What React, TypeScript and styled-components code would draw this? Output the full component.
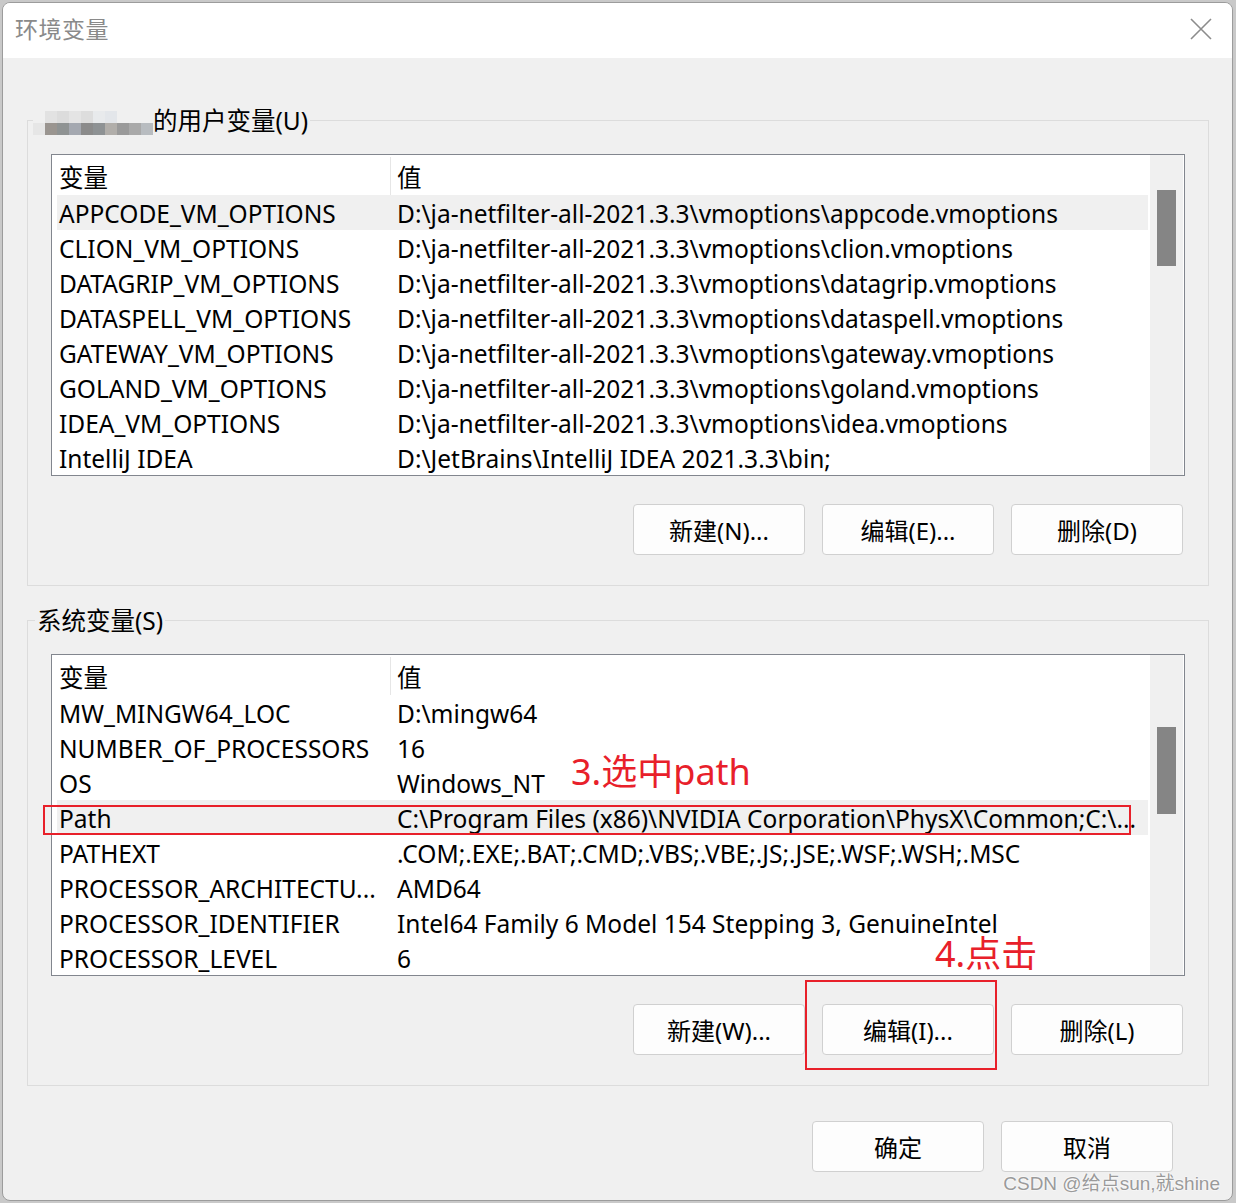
import React, { FC, ReactNode } from 'react';
import styled, { createGlobalStyle } from 'styled-components';

const GlobalStyle = createGlobalStyle`
    html, body {
        margin: 0;
        padding: 0;
        background: #c9c9c9;
    }
    body {
        font-family: "Noto Sans", "Noto Sans CJK SC", sans-serif;
        color: #000;
    }
`;

const Window = styled.div`
    position: relative;
    width: 1229px;
    margin: 2px 3px 0 2px;
    border: 1px solid #9c9c9c;
    border-radius: 8px;
    overflow: hidden;
    background: #f0f0f0;
`;

const TitleBar = styled.div`
    height: 55px;
    background: #fff;
    display: flex;
    align-items: center;
    justify-content: space-between;
    padding: 0 20px 6px 12px;
    box-sizing: border-box;
`;

const Title = styled.span`
    font-size: 23px;
    color: #8a8a8a;
    letter-spacing: 0.5px;
`;

const CloseIcon = styled.svg`
    width: 22px;
    height: 22px;
    margin-top: 3px;
`;

const Body = styled.div`
    padding: 47px 23px 28px 24px;
    display: flex;
    flex-direction: column;
`;

const Group = styled.fieldset<{ $gap?: number }>`
    margin: ${({ $gap }) => $gap || 0}px 0 0 0;
    padding: 0;
    border: 1px solid #dcdcdc;
    min-width: 0;
`;

const Legend = styled.legend`
    margin-left: 7px;
    padding: 1px 2px 0;
    font-size: 24.5px;
    line-height: 30px;
    display: flex;
    align-items: center;
`;

const Blur = styled.span`
    display: inline-grid;
    grid-template-columns: repeat(10, 12px);
    grid-template-rows: 12px 12px;
    margin: 0 0 -4px -4px;
`;

const Pix = styled.span<{ $c: string }>`
    background: ${({ $c }) => $c};
`;

const GroupContent = styled.div`
    padding: 18px 23px 30px 23px;
    display: flex;
    flex-direction: column;
`;

const ListBox = styled.div`
    position: relative;
    height: 320px;
    border: 1px solid #82868e;
    background: #fff;
    display: flex;
`;

const Table = styled.div`
    flex: 0 0 1096px;
    display: flex;
    flex-direction: column;
    font-size: 24.5px;
`;

const Row = styled.div<{ $selected?: boolean; $header?: boolean }>`
    display: grid;
    grid-template-columns: 334px 1fr;
    height: ${({ $header }) => ($header ? 40 : 35)}px;
    box-sizing: border-box;
    padding-top: 2px;
    margin-left: 5px;
    align-items: center;
    background: ${({ $selected }) => ($selected ? '#f0f0f0' : '#fff')};
    white-space: nowrap;
`;

const NameCell = styled.div<{ $header?: boolean }>`
    padding-left: 2px;
    height: 100%;
    display: flex;
    align-items: center;
    border-right: ${({ $header }) => ($header ? '1px solid #e6e6e6' : 'none')};
    overflow: hidden;
`;

const ValueCell = styled.div`
    padding-left: 6px;
    overflow: hidden;
`;

const ScrollTrack = styled.div`
    flex: 1;
    margin: 0 1px 0 2px;
    background: #f0f0f0;
    padding-left: 7px;
`;

const Thumb = styled.div<{ $top: number; $height: number }>`
    width: 19px;
    margin-top: ${({ $top }) => $top}px;
    height: ${({ $height }) => $height}px;
    background: #858585;
`;

const ButtonRow = styled.div<{ $top: number; $right: number }>`
    display: flex;
    justify-content: flex-end;
    gap: 17px;
    margin-top: ${({ $top }) => $top}px;
    padding-right: ${({ $right }) => $right}px;
`;

const Button = styled.div<{ $marked?: boolean }>`
    position: relative;
    width: 170px;
    height: 49px;
    background: #fdfdfd;
    border: 1px solid #d0d0d0;
    border-radius: 4px;
    display: flex;
    align-items: center;
    justify-content: center;
    font-size: 24px;

    &::after {
        content: '';
        display: ${({ $marked }) => ($marked ? 'block' : 'none')};
        position: absolute;
        left: -18px;
        top: -25px;
        right: -4px;
        bottom: -16px;
        border: 2px solid #e8202a;
    }
`;

const RowMark = styled.div`
    position: absolute;
    left: -9px;
    top: 150px;
    width: 1084px;
    height: 26px;
    border: 2px solid #e8202a;
`;

const Note = styled.span<{ $left: number; $top: number }>`
    position: absolute;
    left: ${({ $left }) => $left}px;
    top: ${({ $top }) => $top}px;
    font-size: 36px;
    line-height: 44px;
    color: #e8202a;
    white-space: nowrap;
`;

const Watermark = styled.span`
    position: absolute;
    right: 12px;
    bottom: 5px;
    font-family: "Liberation Sans", "Noto Sans CJK SC", sans-serif;
    font-size: 19px;
    color: #9a9a9a;
    text-shadow: 0 0 2px #fff, 0 0 2px #fff;
`;

type Item = [string, string];

const userVars: Item[] = [
    ['APPCODE_VM_OPTIONS', 'D:\\ja-netfilter-all-2021.3.3\\vmoptions\\appcode.vmoptions'],
    ['CLION_VM_OPTIONS', 'D:\\ja-netfilter-all-2021.3.3\\vmoptions\\clion.vmoptions'],
    ['DATAGRIP_VM_OPTIONS', 'D:\\ja-netfilter-all-2021.3.3\\vmoptions\\datagrip.vmoptions'],
    ['DATASPELL_VM_OPTIONS', 'D:\\ja-netfilter-all-2021.3.3\\vmoptions\\dataspell.vmoptions'],
    ['GATEWAY_VM_OPTIONS', 'D:\\ja-netfilter-all-2021.3.3\\vmoptions\\gateway.vmoptions'],
    ['GOLAND_VM_OPTIONS', 'D:\\ja-netfilter-all-2021.3.3\\vmoptions\\goland.vmoptions'],
    ['IDEA_VM_OPTIONS', 'D:\\ja-netfilter-all-2021.3.3\\vmoptions\\idea.vmoptions'],
    ['IntelliJ IDEA', 'D:\\JetBrains\\IntelliJ IDEA 2021.3.3\\bin;'],
];

const sysVars: Item[] = [
    ['MW_MINGW64_LOC', 'D:\\mingw64'],
    ['NUMBER_OF_PROCESSORS', '16'],
    ['OS', 'Windows_NT'],
    ['Path', 'C:\\Program Files (x86)\\NVIDIA Corporation\\PhysX\\Common;C:\\...'],
    ['PATHEXT', '.COM;.EXE;.BAT;.CMD;.VBS;.VBE;.JS;.JSE;.WSF;.WSH;.MSC'],
    ['PROCESSOR_ARCHITECTU...', 'AMD64'],
    ['PROCESSOR_IDENTIFIER', 'Intel64 Family 6 Model 154 Stepping 3, GenuineIntel'],
    ['PROCESSOR_LEVEL', '6'],
];

// пикселизированное имя пользователя
const blurTop = ['#f0f0f0', '#e2e2e2', '#dcdcdc', '#e4e4e4', '#dddddd', '#e8eaec', '#e3e6ea', '#f0f0f0', '#f0f0f0', '#f0f0f0'];
const blurBottom = ['#e6e6e6', '#9a9590', '#8f9393', '#a4a8b0', '#8b8b8b', '#8e9294', '#b1aeaa', '#9a9a9a', '#a9a9a9', '#b8bcc0'];

const VarList: FC<{
    items: Item[];
    selected: number;
    thumbTop: number;
    thumbHeight: number;
    children?: ReactNode;
}> = ({ items, selected, thumbTop, thumbHeight, children }) => (
    <ListBox>
        <Table>
            <Row $header>
                <NameCell $header>变量</NameCell>
                <ValueCell>值</ValueCell>
            </Row>
            {items.map(([name, value], i) => (
                <Row key={name} $selected={i === selected}>
                    <NameCell>{name}</NameCell>
                    <ValueCell>{value}</ValueCell>
                </Row>
            ))}
        </Table>
        <ScrollTrack>
            <Thumb $top={thumbTop} $height={thumbHeight} />
        </ScrollTrack>
        {children}
    </ListBox>
);

const App: FC = () => (
    <>
        <GlobalStyle />
        <Window>
            <TitleBar>
                <Title>环境变量</Title>
                <CloseIcon viewBox="0 0 22 22">
                    <path d="M1 1 L21 21 M21 1 L1 21" stroke="#8c8c8c" strokeWidth="1.6" fill="none" />
                </CloseIcon>
            </TitleBar>
            <Body>
                <Group>
                    <Legend>
                        <Blur>
                            {blurTop.map((c, i) => <Pix key={'t' + i} $c={c} />)}
                            {blurBottom.map((c, i) => <Pix key={'b' + i} $c={c} />)}
                        </Blur>
                        的用户变量(U)
                    </Legend>
                    <GroupContent>
                        <VarList items={userVars} selected={0} thumbTop={35} thumbHeight={76} />
                        <ButtonRow $top={28} $right={2}>
                            <Button>新建(N)...</Button>
                            <Button>编辑(E)...</Button>
                            <Button>删除(D)</Button>
                        </ButtonRow>
                    </GroupContent>
                </Group>
                <Group $gap={19}>
                    <Legend>系统变量(S)</Legend>
                    <GroupContent>
                        <VarList items={sysVars} selected={3} thumbTop={72} thumbHeight={87}>
                            <RowMark />
                            <Note $left={519} $top={95}>3.选中path</Note>
                            <Note $left={883} $top={277}>4.点击</Note>
                        </VarList>
                        <ButtonRow $top={28} $right={2}>
                            <Button>新建(W)...</Button>
                            <Button $marked>编辑(I)...</Button>
                            <Button>删除(L)</Button>
                        </ButtonRow>
                    </GroupContent>
                </Group>
                <ButtonRow $top={35} $right={36}>
                    <Button>确定</Button>
                    <Button>取消</Button>
                </ButtonRow>
            </Body>
            <Watermark>CSDN @给点sun,就shine</Watermark>
        </Window>
    </>
);

export default App;
